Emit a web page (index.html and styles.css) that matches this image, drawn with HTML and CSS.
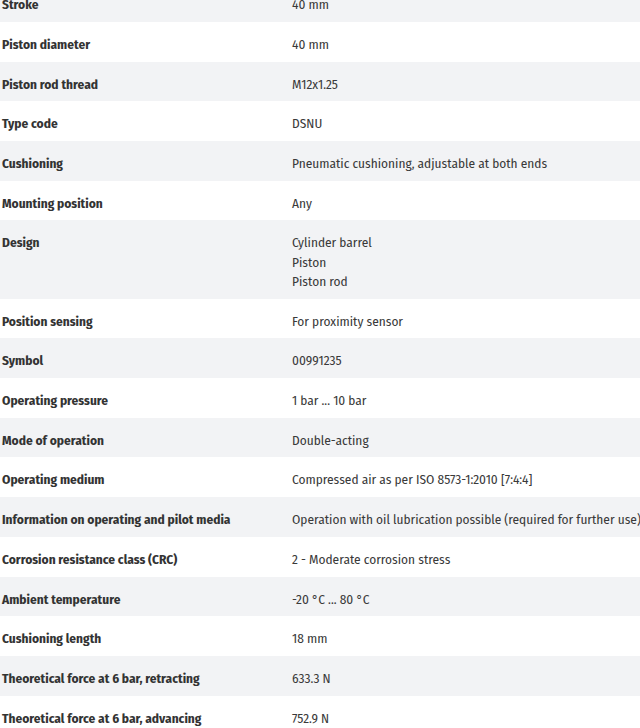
FILE: index.html
```html
<!DOCTYPE html>
<html lang="en">
<head>
<meta charset="utf-8">
<title>Technical data</title>
<link rel="stylesheet" href="styles.css">
</head>
<body>
<div class="specs">
  <div class="row"><div class="label">Stroke</div><div class="value">40 mm</div></div>
  <div class="row"><div class="label">Piston diameter</div><div class="value">40 mm</div></div>
  <div class="row"><div class="label">Piston rod thread</div><div class="value">M12x1.25</div></div>
  <div class="row"><div class="label">Type code</div><div class="value">DSNU</div></div>
  <div class="row"><div class="label">Cushioning</div><div class="value">Pneumatic cushioning, adjustable at both ends</div></div>
  <div class="row"><div class="label">Mounting position</div><div class="value">Any</div></div>
  <div class="row"><div class="label">Design</div><div class="value"><div>Cylinder barrel</div><div>Piston</div><div>Piston rod</div></div></div>
  <div class="row"><div class="label">Position sensing</div><div class="value">For proximity sensor</div></div>
  <div class="row"><div class="label">Symbol</div><div class="value">00991235</div></div>
  <div class="row"><div class="label">Operating pressure</div><div class="value">1 bar ... 10 bar</div></div>
  <div class="row"><div class="label">Mode of operation</div><div class="value">Double-acting</div></div>
  <div class="row"><div class="label">Operating medium</div><div class="value">Compressed air as per ISO 8573-1:2010 [7:4:4]</div></div>
  <div class="row"><div class="label">Information on operating and pilot media</div><div class="value">Operation with oil lubrication possible (required for further use)</div></div>
  <div class="row"><div class="label">Corrosion resistance class (CRC)</div><div class="value">2 - Moderate corrosion stress</div></div>
  <div class="row"><div class="label">Ambient temperature</div><div class="value">-20 °C ... 80 °C</div></div>
  <div class="row"><div class="label">Cushioning length</div><div class="value">18 mm</div></div>
  <div class="row"><div class="label">Theoretical force at 6 bar, retracting</div><div class="value">633.3 N</div></div>
  <div class="row"><div class="label">Theoretical force at 6 bar, advancing</div><div class="value">752.9 N</div></div>
</div>
</body>
</html>
```
FILE: styles.css
```css
html, body {
  margin: 0;
  padding: 0;
  background: #ffffff;
  overflow: hidden;
}

body {
  font-family: "Fira Sans Condensed", "Roboto Condensed", "Liberation Sans", sans-serif;
  font-size: 13.3px;
  line-height: 19.3px;
  color: #333333;
}

.specs {
  margin-top: -17.7px;
  width: 640px;
}

.row {
  display: grid;
  grid-template-columns: 289px 1fr;
  padding: 14px 0 6.4px;
  white-space: nowrap;
}

.row:nth-child(odd) {
  background: #f2f3f5;
}

.label {
  padding-left: 2px;
  font-weight: 700;
  color: #333333;
}

.value {
  padding-left: 3px;
  color: #3a3a3a;
}
```
